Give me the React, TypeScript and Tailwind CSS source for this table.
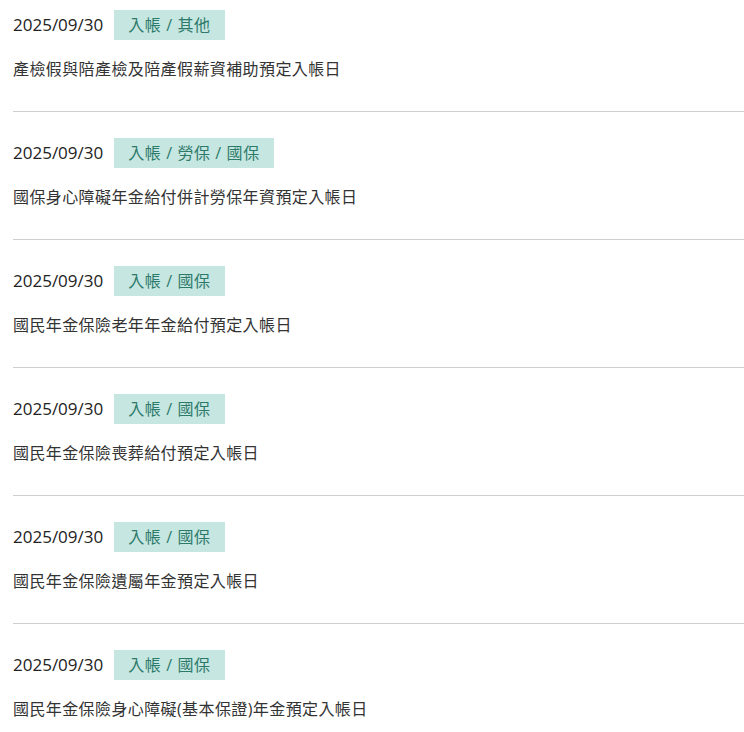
import React from "react";

const items = [
  { tag: "入帳 / 其他", desc: "產檢假與陪產檢及陪產假薪資補助預定入帳日" },
  { tag: "入帳 / 勞保 / 國保", desc: "國保身心障礙年金給付併計勞保年資預定入帳日" },
  { tag: "入帳 / 國保", desc: "國民年金保險老年年金給付預定入帳日" },
  { tag: "入帳 / 國保", desc: "國民年金保險喪葬給付預定入帳日" },
  { tag: "入帳 / 國保", desc: "國民年金保險遺屬年金預定入帳日" },
  { tag: "入帳 / 國保", desc: "國民年金保險身心障礙(基本保證)年金預定入帳日" },
];

export default function App() {
  return (
    <div
      className="bg-white w-[744px] min-h-[732px] pl-[13px] text-[16px] text-[#333]"
      style={{ fontFamily: '"Open Sans", "Noto Sans CJK TC", sans-serif' }}
    >
      {items.map((it, i) => (
        <div
          key={i}
          className={
            (i === 0 ? "pt-[10px] " : "pt-[26px] ") +
            (i < items.length - 1 ? "pb-[30px] border-b border-[#cfcfcf]" : "pb-[30px]")
          }
        >
          <div className="flex items-center h-[30px]">
            <span className="text-[#222] text-[17px] leading-[30px]">2025/09/30</span>
            <span className="ml-[11px] h-[30px] px-[14px] flex items-center bg-[#c5e6e1] text-[#2e7a6a] leading-[30px] tracking-[0.6px]">
              {it.tag}
            </span>
          </div>
          <div className="mt-[17px] leading-[24px] text-[#333] tracking-[0.4px]">{it.desc}</div>
        </div>
      ))}
    </div>
  );
}
